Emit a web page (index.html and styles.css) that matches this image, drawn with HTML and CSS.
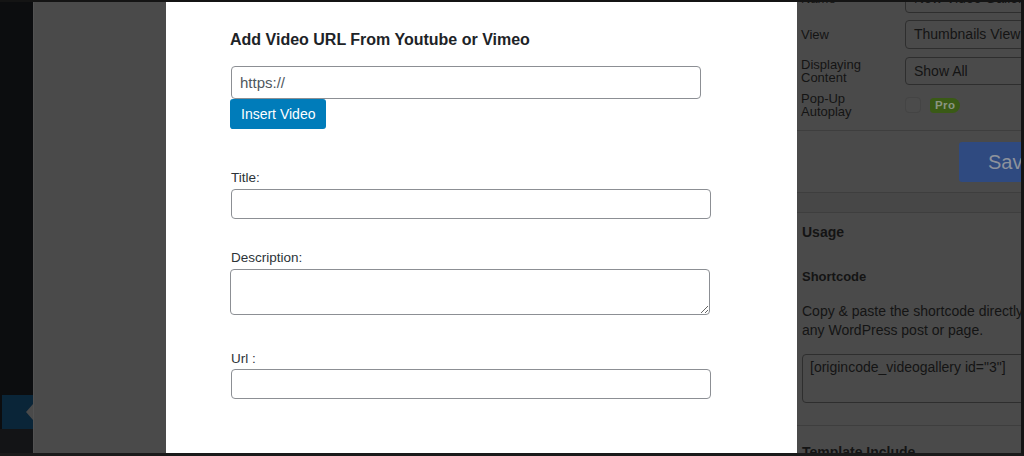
FILE: index.html
```html
<!DOCTYPE html>
<html lang="en">
<head>
<meta charset="utf-8">
<title>Add Video</title>
<link rel="stylesheet" href="styles.css">
</head>
<body>
<div class="frame">
  <aside class="sidebar">
    <div class="menu-active"></div>
    <div class="menu-rest"></div>
  </aside>
  <div class="backdrop-left"></div>
  <main class="modal">
    <h2 class="modal-title">Add Video URL From Youtube or Vimeo</h2>
    <input class="url-input" type="text" value="https://">
    <button class="btn-insert" type="button">Insert Video</button>
    <div class="field field-title">
      <label class="field-label">Title:</label>
      <input class="text-input" type="text">
    </div>
    <div class="field field-desc">
      <label class="field-label">Description:</label>
      <textarea class="text-area"></textarea>
    </div>
    <div class="field field-url">
      <label class="field-label">Url :</label>
      <input class="text-input" type="text">
    </div>
  </main>
  <section class="panel">
    <div class="panel-inner">
      <div class="settings">
        <div class="set-row">
          <span class="set-label">Name</span>
          <div class="set-box">New Video Gallery</div>
        </div>
        <div class="set-row">
          <span class="set-label">View</span>
          <div class="set-box">Thumbnails View</div>
        </div>
        <div class="set-row row-narrow">
          <span class="set-label">Displaying<br>Content</span>
          <div class="set-box">Show All</div>
        </div>
        <div class="set-row row-check">
          <span class="set-label">Pop-Up<br>Autoplay</span>
          <div class="check-wrap"><span class="checkbox"></span><span class="pro">Pro</span></div>
        </div>
      </div>
      <div class="save-area">
        <button class="btn-save" type="button">Save</button>
      </div>
      <div class="gap"></div>
      <div class="usage">
        <h3 class="usage-title">Usage</h3>
        <h4 class="usage-sub">Shortcode</h4>
        <p class="usage-text">Copy &amp; paste the shortcode directly into any WordPress post or page.</p>
        <div class="shortcode">[origincode_videogallery id="3"]</div>
      </div>
      <div class="template">
        <h4 class="usage-title">Template Include</h4>
      </div>
    </div>
  </section>
</div>
</body>
</html>
```

FILE: styles.css
```css
* { box-sizing: border-box; }
html, body { margin: 0; padding: 0; background: #111; }
body { font-family: "Liberation Sans", Arial, sans-serif; }

.frame {
  width: 1024px;
  height: 456px;
  display: flex;
  border-top: 2px solid #141414;
  border-right: 3px solid #141414;
  border-bottom: 3px solid #1a1a1a;
  overflow: hidden;
  background: #4a4a4a;
}

/* Sidebar */
.sidebar {
  width: 33px;
  flex: none;
  background: #0c0d0f;
  display: flex;
  flex-direction: column;
  padding-top: 393px;
}
.menu-active {
  height: 34px;
  margin-left: 2px;
  background: #0a2538;
  position: relative;
}
.menu-active::after {
  content: "";
  position: absolute;
  right: 0;
  top: 9px;
  border-style: solid;
  border-width: 8px 7px 8px 0;
  border-color: transparent #4a4a4a transparent transparent;
}
.menu-rest { flex: 1; background: #131416; }

.backdrop-left {
  width: 133px;
  flex: none;
  background: #4a4a4a;
  border-left: 1px solid #525252;
}

/* Modal */
.modal {
  width: 631px;
  flex: none;
  background: #fff;
  padding: 28px 0 0 64px;
  color: #1d2327;
}
.modal-title {
  margin: 0 0 16px;
  font-size: 16px;
  line-height: 20px;
  font-weight: 700;
  color: #1d2327;
}
.url-input {
  display: block;
  width: 470px;
  height: 33px;
  margin: 0 0 0 1px;
  padding: 0 8px;
  border: 1px solid #8c8f94;
  border-radius: 4px;
  font-family: inherit;
  font-size: 15px;
  color: #50575e;
  background: #fff;
}
.btn-insert {
  display: block;
  height: 30px;
  margin: 0;
  padding: 0 11px;
  border: 0;
  border-radius: 3px;
  background: #007cba;
  color: #fff;
  font-family: inherit;
  font-size: 14px;
}
.field { display: flex; flex-direction: column; align-items: flex-start; }
.field-title { margin-top: 40px; }
.field-desc { margin-top: 30px; }
.field-url { margin-top: 35px; }
.field-label {
  font-size: 13.5px;
  line-height: 18px;
  color: #2c3338;
  margin: 0 0 2px 1px;
}
.text-input {
  display: block;
  width: 480px;
  height: 30px;
  margin: 0 0 0 1px;
  border: 1px solid #8c8f94;
  border-radius: 4px;
  background: #fff;
}
.text-area {
  display: block;
  width: 480px;
  height: 46px;
  margin: 0;
  border: 1px solid #8c8f94;
  border-radius: 4px;
  background: #fff;
}
.field-url .field-label { margin-bottom: 1px; }

/* Right panel (dimmed) */
.panel {
  width: 224px;
  flex: none;
  overflow: hidden;
  background: #4a4a4a;
  color: #141414;
}
.panel-inner { width: 262px; margin-top: -18px; }
.settings {
  background: #4a4a4a;
  padding: 0 0 12px 4px;
  display: flex;
  flex-direction: column;
  gap: 7px;
  border-bottom: 1px solid #3e3e3e;
}
.set-row {
  display: grid;
  grid-template-columns: 104px 1fr;
  align-items: center;
}
.row-narrow { margin-top: 1px; }
.set-label { font-size: 13px; line-height: 13px; }
.set-box {
  height: 29px;
  border: 1px solid #2e2e2e;
  border-radius: 4px;
  padding: 0 8px;
  font-size: 14px;
  line-height: 27px;
  white-space: nowrap;
  overflow: hidden;
}
.row-narrow .set-box { height: 28px; line-height: 26px; }
.check-wrap { display: flex; align-items: center; gap: 9px; }
.checkbox {
  width: 16px;
  height: 16px;
  border: 1px solid #444;
  border-radius: 4px;
  background: #4b4b4b;
}
.pro {
  height: 15px;
  padding: 0 5px;
  border-radius: 4px 8px 8px 4px;
  background: #3a5a16;
  color: #8a9582;
  font-size: 11.5px;
  font-weight: 700;
  line-height: 15px;
  letter-spacing: 0.4px;
  margin-top: 1px;
}
.save-area {
  padding: 11px 0 10px 162px;
  border-bottom: 1px solid #3e3e3e;
  background: #4a4a4a;
}
.btn-save {
  display: block;
  width: 100px;
  height: 40px;
  border: 0;
  border-radius: 3px;
  background: #2f4a80;
  color: #8d929c;
  font-family: inherit;
  font-size: 20px;
  text-align: left;
  padding: 0 0 0 29px;
}
.gap {
  height: 20px;
  background: #474747;
  border-bottom: 1px solid #3e3e3e;
}
.usage {
  padding: 10px 0 22px 5px;
  border-bottom: 1px solid #3e3e3e;
}
.usage-title {
  margin: 0;
  font-size: 14px;
  line-height: 18px;
  font-weight: 700;
}
.usage-sub {
  margin: 27px 0 0;
  font-size: 13px;
  line-height: 18px;
  font-weight: 700;
}
.usage-text {
  margin: 16px 0 0;
  font-size: 14px;
  line-height: 19px;
  width: 250px;
}
.shortcode {
  margin-top: 14px;
  height: 49px;
  border: 1px solid #2e2e2e;
  border-radius: 4px;
  padding: 2px 7px;
  font-size: 14px;
  line-height: 20px;
  white-space: nowrap;
}
.template { padding: 17px 0 0 5px; }
```
